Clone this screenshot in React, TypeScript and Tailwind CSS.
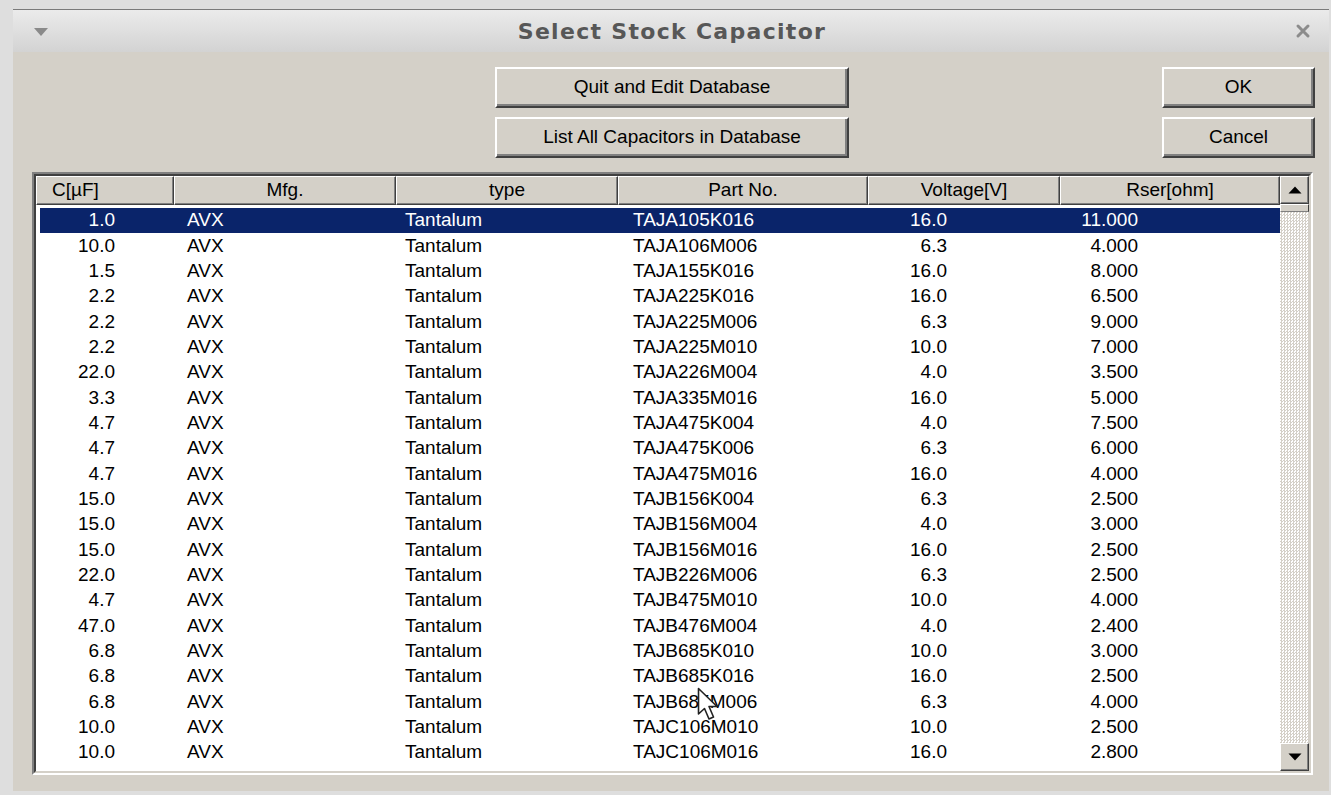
import React from "react";

type Row = [string, string, string, string, string, string];

const rows: Row[] = [
  ["1.0", "AVX", "Tantalum", "TAJA105K016", "16.0", "11.000"],
  ["10.0", "AVX", "Tantalum", "TAJA106M006", "6.3", "4.000"],
  ["1.5", "AVX", "Tantalum", "TAJA155K016", "16.0", "8.000"],
  ["2.2", "AVX", "Tantalum", "TAJA225K016", "16.0", "6.500"],
  ["2.2", "AVX", "Tantalum", "TAJA225M006", "6.3", "9.000"],
  ["2.2", "AVX", "Tantalum", "TAJA225M010", "10.0", "7.000"],
  ["22.0", "AVX", "Tantalum", "TAJA226M004", "4.0", "3.500"],
  ["3.3", "AVX", "Tantalum", "TAJA335M016", "16.0", "5.000"],
  ["4.7", "AVX", "Tantalum", "TAJA475K004", "4.0", "7.500"],
  ["4.7", "AVX", "Tantalum", "TAJA475K006", "6.3", "6.000"],
  ["4.7", "AVX", "Tantalum", "TAJA475M016", "16.0", "4.000"],
  ["15.0", "AVX", "Tantalum", "TAJB156K004", "6.3", "2.500"],
  ["15.0", "AVX", "Tantalum", "TAJB156M004", "4.0", "3.000"],
  ["15.0", "AVX", "Tantalum", "TAJB156M016", "16.0", "2.500"],
  ["22.0", "AVX", "Tantalum", "TAJB226M006", "6.3", "2.500"],
  ["4.7", "AVX", "Tantalum", "TAJB475M010", "10.0", "4.000"],
  ["47.0", "AVX", "Tantalum", "TAJB476M004", "4.0", "2.400"],
  ["6.8", "AVX", "Tantalum", "TAJB685K010", "10.0", "3.000"],
  ["6.8", "AVX", "Tantalum", "TAJB685K016", "16.0", "2.500"],
  ["6.8", "AVX", "Tantalum", "TAJB685M006", "6.3", "4.000"],
  ["10.0", "AVX", "Tantalum", "TAJC106M010", "10.0", "2.500"],
  ["10.0", "AVX", "Tantalum", "TAJC106M016", "16.0", "2.800"],
];

function Button({ label, w }: { label: string; w: string }) {
  return (
    <div
      className={`${w} h-[41px] border-t-[2px] border-l-[2px] border-t-white border-l-white border-r-[2px] border-b-[2px] border-r-[#404040] border-b-[#404040] bg-[#d4d0c8] shadow-[inset_-2px_-2px_0_#808080] flex items-center justify-center text-[19px] text-black`}
    >
      {label}
    </div>
  );
}

function HeaderCell({
  label,
  w,
  align,
}: {
  label: string;
  w: string;
  align: "left" | "center";
}) {
  return (
    <div
      className={`${w} h-full border-t border-l border-t-white border-l-white border-r border-b border-r-[#404040] border-b-[#404040] shadow-[inset_-1px_-1px_0_#808080] flex items-center ${
        align === "left" ? "justify-start pl-[15px]" : "justify-center"
      }`}
    >
      {label}
    </div>
  );
}

function ScrollArrow({ up }: { up: boolean }) {
  return (
    <div className="h-[28px] w-full border-t-[1.5px] border-l-[1.5px] border-t-white border-l-white border-r-[1.5px] border-b-[1.5px] border-r-[#404040] border-b-[#404040] bg-[#d4d0c8] shadow-[inset_-1px_-1px_0_#808080] flex items-center justify-center">
      <svg width="14" height="8" viewBox="0 0 14 8">
        {up ? (
          <polygon points="7,0.5 13.5,7.5 0.5,7.5" fill="#000" />
        ) : (
          <polygon points="0.5,0.5 13.5,0.5 7,7.5" fill="#000" />
        )}
      </svg>
    </div>
  );
}

function Cursor() {
  return (
    <svg
      className="absolute left-[697px] top-[687px]"
      width="26"
      height="38"
      viewBox="0 0 26 38"
    >
      <path
        d="M1.5 1.5 L1.5 27 L7.5 21.5 L12 32 L16.5 30 L12 19.5 L20 19.5 Z"
        fill="#fff"
        stroke="#222"
        strokeWidth="1.6"
        strokeLinejoin="round"
      />
    </svg>
  );
}

export default function App() {
  return (
    <div className="relative w-[1331px] h-[795px] overflow-hidden bg-[#dedede] font-['Liberation_Sans',Arial,sans-serif] text-black">
      <div className="pt-[9px] pl-[13px] pr-[2px] h-full flex flex-col">
        {/* window frame */}
        <div className="flex flex-col border-t border-t-[#7a7a7a]">
          {/* title bar */}
          <div className="h-[42px] bg-gradient-to-b from-[#ebebeb] to-[#d3d3d3] flex items-center px-[20px] relative">
            <svg width="16" height="10" viewBox="0 0 16 10" className="mt-[1px]">
              <polygon points="1,1 15,1 8,9" fill="#8a8a8a" />
            </svg>
            <div className="flex-1 text-center font-['DejaVu_Sans',sans-serif] font-bold text-[22px] tracking-[1.3px] text-[#575757]">
              Select Stock Capacitor
            </div>
            <svg width="16" height="16" viewBox="0 0 16 16" className="mr-[-2px]">
              <path
                d="M3 3 L13 13 M13 3 L3 13"
                stroke="#8c8c8c"
                strokeWidth="3"
                strokeLinecap="round"
              />
            </svg>
          </div>

          {/* dialog body */}
          <div className="bg-[#d4d0c8] h-[739px] flex flex-col pt-[15px]">
            <div className="flex">
              <div className="ml-[482px] flex flex-col gap-[9px]">
                <Button label="Quit and Edit Database" w="w-[354px]" />
                <Button label="List All Capacitors in Database" w="w-[354px]" />
              </div>
              <div className="ml-auto mr-[14px] flex flex-col gap-[9px]">
                <Button label="OK" w="w-[153px]" />
                <Button label="Cancel" w="w-[153px]" />
              </div>
            </div>

            {/* list box with sunken frame */}
            <div className="mt-[14px] ml-[19px] mr-[16px] h-[603px] border-t-2 border-l-2 border-t-[#808080] border-l-[#808080] border-r-2 border-b-2 border-r-white border-b-white">
              <div className="h-full border-t-2 border-l-2 border-t-[#404040] border-l-[#404040] border-r-2 border-b-2 border-r-[#d4d0c8] border-b-[#d4d0c8] flex bg-white">
                <div className="flex-1 flex flex-col min-w-0 text-[19px]">
                  <div className="h-[29px] flex bg-[#d4d0c8] shrink-0">
                    <HeaderCell label="C[µF]" w="w-[138px]" align="left" />
                    <HeaderCell label="Mfg." w="w-[222px]" align="center" />
                    <HeaderCell label="type" w="w-[222px]" align="center" />
                    <HeaderCell label="Part No." w="w-[250px]" align="center" />
                    <HeaderCell label="Voltage[V]" w="w-[192px]" align="center" />
                    <HeaderCell label="Rser[ohm]" w="flex-1" align="center" />
                  </div>
                  <div className="flex-1 overflow-hidden pt-[3px]">
                    {rows.map((r, i) => {
                      const sel = i === 0;
                      return (
                        <div key={i} className="h-[25.33px] flex">
                          <div className="w-[4px] shrink-0" />
                          <div
                            className={`flex-1 flex items-center ${
                              sel ? "bg-[#0a246a] text-white" : ""
                            }`}
                          >
                            <div className="w-[134px] text-right pr-[59px]">{r[0]}</div>
                            <div className="w-[222px] pl-[13px]">{r[1]}</div>
                            <div className="w-[222px] pl-[9px]">{r[2]}</div>
                            <div className="w-[250px] pl-[15px]">{r[3]}</div>
                            <div className="w-[192px] text-right pr-[113px]">{r[4]}</div>
                            <div className="flex-1 text-right pr-[142px]">{r[5]}</div>
                          </div>
                        </div>
                      );
                    })}
                  </div>
                </div>

                {/* vertical scrollbar */}
                <div className="w-[29px] shrink-0 flex flex-col bg-[repeating-conic-gradient(#d4d0c8_0_25%,#ffffff_0_50%)] bg-[length:3px_3px]">
                  <ScrollArrow up />
                  <div className="h-[8px] w-full border-t border-l border-t-white border-l-white border-r border-b border-r-[#404040] border-b-[#808080] bg-[#d4d0c8]" />
                  <div className="flex-1" />
                  <ScrollArrow up={false} />
                </div>
              </div>
            </div>
          </div>
        </div>
      </div>
      <Cursor />
    </div>
  );
}
